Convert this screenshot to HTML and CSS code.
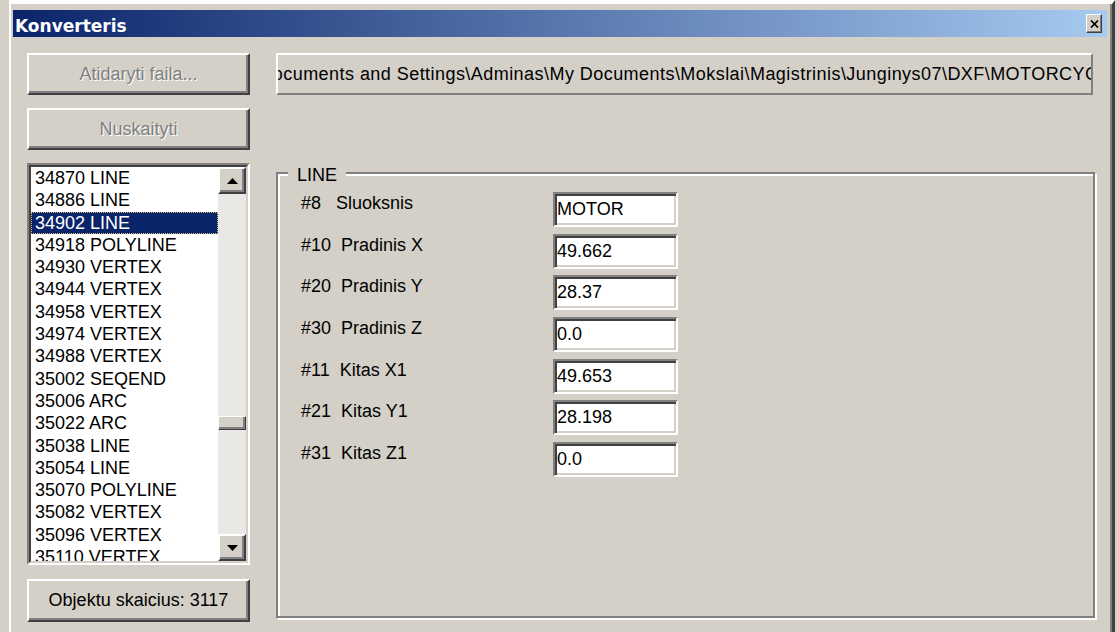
FILE: index.html
```html
<!DOCTYPE html>
<html lang="lt">
<head>
<meta charset="utf-8">
<title>Konverteris</title>
<link rel="stylesheet" href="styles.css">
</head>
<body>
<div class="window">
  <div class="titlebar">
    <span class="title">Konverteris</span>
    <button class="close" type="button" aria-label="Uždaryti">
      <svg width="9" height="8" viewBox="0 0 9 8"><path d="M1 0.5 L8 7.5 M8 0.5 L1 7.5" stroke="#000" stroke-width="1.7" fill="none"/></svg>
    </button>
  </div>
  <div class="client">
    <div class="side">
      <button class="btn" type="button" disabled>Atidaryti faila...</button>
      <button class="btn" type="button" disabled>Nuskaityti</button>
      <div class="listbox">
        <div class="listbox-in">
          <ul class="items">
            <li>34870 LINE</li>
            <li>34886 LINE</li>
            <li class="sel">34902 LINE</li>
            <li>34918 POLYLINE</li>
            <li>34930 VERTEX</li>
            <li>34944 VERTEX</li>
            <li>34958 VERTEX</li>
            <li>34974 VERTEX</li>
            <li>34988 VERTEX</li>
            <li>35002 SEQEND</li>
            <li>35006 ARC</li>
            <li>35022 ARC</li>
            <li>35038 LINE</li>
            <li>35054 LINE</li>
            <li>35070 POLYLINE</li>
            <li>35082 VERTEX</li>
            <li>35096 VERTEX</li>
            <li>35110 VERTEX</li>
          </ul>
          <div class="scrollbar">
            <div class="sb-btn"><svg width="11" height="6" viewBox="0 0 11 6"><polygon points="5.5,0 11,6 0,6" fill="#000"/></svg></div>
            <div class="sb-track"><div class="sb-thumb"></div></div>
            <div class="sb-btn"><svg width="11" height="6" viewBox="0 0 11 6"><polygon points="0,0 11,0 5.5,6" fill="#000"/></svg></div>
          </div>
        </div>
      </div>
      <div class="btn count">Objektu skaicius: 3117</div>
    </div>
    <div class="main">
      <div class="path">C:\Documents and Settings\Adminas\My Documents\Mokslai\Magistrinis\Junginys07\DXF\MOTORCYCLE.dxf</div>
      <div class="group">
        <span class="legend">LINE</span>
        <div class="rows">
          <span class="lbl">#8   Sluoksnis</span><div class="field">MOTOR</div>
          <span class="lbl">#10  Pradinis X</span><div class="field">49.662</div>
          <span class="lbl">#20  Pradinis Y</span><div class="field">28.37</div>
          <span class="lbl">#30  Pradinis Z</span><div class="field">0.0</div>
          <span class="lbl">#11  Kitas X1</span><div class="field">49.653</div>
          <span class="lbl">#21  Kitas Y1</span><div class="field">28.198</div>
          <span class="lbl">#31  Kitas Z1</span><div class="field">0.0</div>
        </div>
      </div>
    </div>
  </div>
</div>
</body>
</html>
```

FILE: styles.css
```css
* {
  box-sizing: border-box;
}

html,
body {
  margin: 0;
  padding: 0;
}

body {
  width: 1117px;
  height: 632px;
  overflow: hidden;
  background: #d4d0c8;
  font-family: "Liberation Sans", Arial, sans-serif;
  font-size: 18px;
  color: #000;
}

/* dialog frame */
.window {
  margin-left: 9px;
  width: 1106px;
  height: 660px;
  background: #d4d0c8;
  border-left: 2px solid #fff;
  border-top: 4px solid #fff;
  border-right: 3px solid #404040;
  box-shadow: inset -2px 0 0 #808080;
  padding: 6px 5px 0 2px;
}

.titlebar {
  height: 27px;
  display: flex;
  align-items: center;
  justify-content: space-between;
  padding: 0 5px 0 2px;
  background: linear-gradient(to right, #0a246a, #a6caf0);
}

.title {
  font-family: "DejaVu Sans", Verdana, sans-serif;
  font-weight: bold;
  font-size: 17px;
  line-height: 22px;
  padding-top: 5px;
  color: #fff;
  align-self: flex-start;
}

.close {
  width: 16px;
  height: 19px;
  padding: 0;
  margin: 0;
  display: flex;
  align-items: center;
  justify-content: center;
  background: #d4d0c8;
  border: 1px solid;
  border-color: #fff #404040 #404040 #fff;
  box-shadow: inset -1px -1px 0 #808080;
}

/* dialog body */
.client {
  display: flex;
  gap: 26px;
  padding: 16px 10px 0 14px;
}

.side {
  width: 223px;
  display: flex;
  flex-direction: column;
  gap: 13px;
}

.btn {
  height: 42px;
  margin: 0;
  padding: 0;
  display: flex;
  align-items: center;
  justify-content: center;
  font: inherit;
  color: #000;
  background: #d4d0c8;
  border: 2px solid;
  border-color: #fff #404040 #404040 #fff;
  box-shadow: inset -2px -2px 0 #808080;
}

.btn:disabled {
  color: #808080;
  text-shadow: 1px 1px 0 #fff;
}

.count {
  height: 43px;
  margin-top: 1px;
}

/* list of entities */
.listbox {
  height: 402px;
  border: 2px solid;
  border-color: #808080 #fff #fff #808080;
}

.listbox-in {
  height: 100%;
  display: flex;
  background: #fff;
  border: 2px solid;
  border-color: #404040 #d4d0c8 #d4d0c8 #404040;
}

.items {
  flex: 1;
  margin: 0;
  padding: 0;
  list-style: none;
  overflow: hidden;
}

.items li {
  line-height: 22.3px;
  height: 22.3px;
  padding-left: 4px;
  white-space: nowrap;
}

.items li.sel {
  background: #0a246a;
  color: #fff;
  outline: 1px dotted #d8c070;
  outline-offset: -1px;
}

.scrollbar {
  width: 28px;
  display: flex;
  flex-direction: column;
}

.sb-btn {
  height: 27px;
  flex: none;
  display: flex;
  align-items: center;
  justify-content: center;
  background: #d4d0c8;
  border: 2px solid;
  border-color: #fff #404040 #404040 #fff;
  box-shadow: inset -2px -2px 0 #808080;
}

.sb-track {
  flex: 1;
  background: #eae8e4;
}

.sb-thumb {
  margin-top: 222px;
  height: 14px;
  background: #d4d0c8;
  border: 1px solid;
  border-color: #fff #404040 #404040 #fff;
  box-shadow: inset -2px -2px 0 #808080;
}

/* right side */
.main {
  flex: 1;
  display: flex;
  flex-direction: column;
}

.path {
  height: 42px;
  width: 817px;
  border: 2px solid;
  border-color: #fff #808080 #808080 #fff;
  overflow: hidden;
  white-space: nowrap;
  line-height: 38px;
  letter-spacing: 0.45px;
  text-indent: -43px;
}

.group {
  position: relative;
  margin-top: 77px;
  width: 819px;
  height: 446px;
  border: 2px solid #808080;
  box-shadow: inset 2px 2px 0 #fff, 2px 2px 0 #fff;
  padding: 18px 0 0 23px;
}

.legend {
  position: absolute;
  top: -10px;
  left: 10px;
  padding: 0 9px;
  line-height: 22px;
  background: #d4d0c8;
}

.rows {
  display: grid;
  grid-template-columns: 252px 125px;
  grid-auto-rows: 35px;
  row-gap: 6.67px;
}

.lbl {
  line-height: 22px;
  white-space: pre;
}

.field {
  height: 35px;
  background: #fff;
  border: 2px solid;
  border-color: #808080 #fff #fff #808080;
  box-shadow: inset 2px 2px 0 #404040, inset -2px -2px 0 #d4d0c8;
  padding-left: 2px;
  line-height: 31px;
  white-space: nowrap;
  overflow: hidden;
}
```
